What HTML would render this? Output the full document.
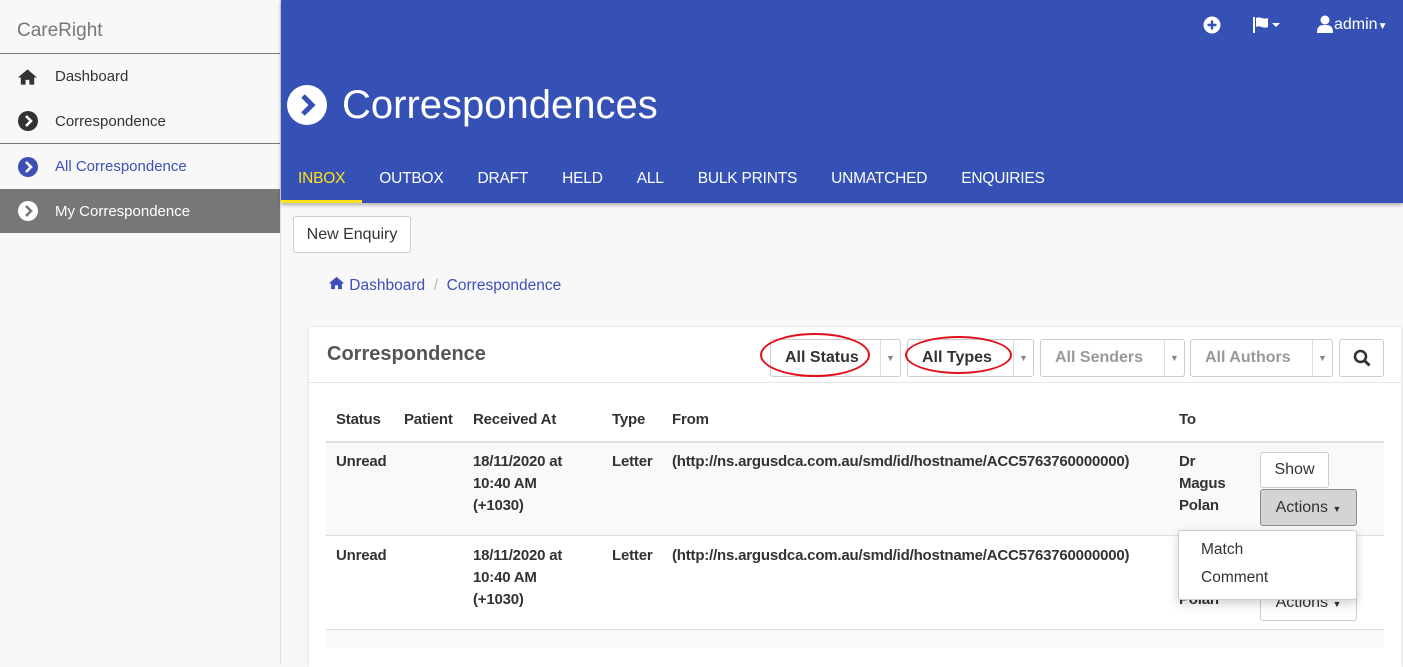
<!DOCTYPE html>
<html><head><meta charset="utf-8"><style>
*{box-sizing:border-box;margin:0;padding:0}
body{width:1403px;height:664px;overflow:hidden;background:#f8f8f8;font-family:"Liberation Sans",sans-serif;color:#333;position:relative}
.side{position:absolute;left:0;top:0;width:281px;height:664px;background:#f8f8f8;border-right:1px solid #e0e0e0}
.brand{height:54px;border-bottom:1px solid #777;font-size:19px;color:#777;padding:20px 0 0 17px}
.it{height:45px;display:flex;align-items:center;padding-left:17px;font-size:15px;color:#333}
.it .ic{width:21px;height:21px;margin-right:17px;display:flex;align-items:center;justify-content:center}
.hdr{position:absolute;left:281px;top:0;width:1122px;height:203px;background:#3551b5;box-shadow:0 2px 4px rgba(0,0,0,.3)}
.tabs{position:absolute;top:170px;left:0;display:flex;font-size:15.5px;color:#fff;letter-spacing:-0.2px}
.tabs div{padding:0 17px 0 17px;height:33px}
.panel{position:absolute;left:309px;top:327px;width:1092px;height:340px;background:#fff;box-shadow:0 0 3px rgba(0,0,0,.15)}
.sel{position:absolute;top:339px;height:38px;border:1px solid #ccc;border-radius:3px;background:#fff;font-size:16px;font-weight:bold;color:#333}
.sel span{position:absolute;top:9px}
.sel .ar{position:absolute;right:0;top:0;width:20px;height:36px;border-left:1px solid #ddd;font-size:9px;color:#888;text-align:center;line-height:36px}
.t{position:absolute;font-size:15px;font-weight:bold;color:#333;line-height:22px;letter-spacing:-0.2px}
.btn{position:absolute;border:1px solid #ccc;border-radius:3px;background:#fff;font-size:16px;color:#333;text-align:center}
.ell{position:absolute;border:2px solid #e0101a;border-radius:50%}
</style></head><body>
<div class="side">
<div class="brand">CareRight</div>
<div class="it"><div class="ic"><svg width="22" height="18" viewBox="0 0 22 18"><path d="M11 1L1 9.5h3V17h5v-5h4v5h5V9.5h3z" fill="#333"/></svg></div>Dashboard</div>
<div class="it" style="border-bottom:1px solid #777"><div class="ic"><svg width="20" height="20"><circle cx="10" cy="10" r="10" fill="#333"/><path d="M8 5l5 5-5 5" stroke="#fff" stroke-width="2.6" fill="none"/></svg></div>Correspondence</div>
<div class="it" style="color:#3e4fb8"><div class="ic"><svg width="20" height="20"><circle cx="10" cy="10" r="10" fill="#3e4fb8"/><path d="M8 5l5 5-5 5" stroke="#fff" stroke-width="2.6" fill="none"/></svg></div>All Correspondence</div>
<div class="it" style="background:#777;color:#fff;height:44px"><div class="ic"><svg width="20" height="20"><circle cx="10" cy="10" r="10" fill="#fff"/><path d="M8 5l5 5-5 5" stroke="#777" stroke-width="2.6" fill="none"/></svg></div>My Correspondence</div>
</div>
<div class="hdr">
<svg style="position:absolute;left:922px;top:16px" width="18" height="18"><circle cx="9" cy="9" r="8.5" fill="#fff"/><path d="M9 4.5v9M4.5 9h9" stroke="#3551b5" stroke-width="2.4"/></svg>
<svg style="position:absolute;left:972px;top:16px" width="30" height="18"><path d="M1 1v16" stroke="#fff" stroke-width="2"/><path d="M3 2c4-2 7 2 12 0v9c-5 2-8-2-12 0z" fill="#fff"/><path d="M19 7h8l-4 4z" fill="#fff"/></svg>
<svg style="position:absolute;left:1036px;top:15px" width="16" height="18"><circle cx="8" cy="5" r="4.5" fill="#fff"/><path d="M0 18c0-7 3-8 8-8s8 1 8 8z" fill="#fff"/></svg>
<div style="position:absolute;left:1053px;top:16px;color:#fff;font-size:16px">admin<span style="font-size:10px">▼</span></div>
<svg style="position:absolute;left:5px;top:84px" width="42" height="42"><circle cx="21" cy="21" r="20" fill="#fff"/><path d="M17 12l9 9-9 9" stroke="#3551b5" stroke-width="5" fill="none"/></svg>
<div style="position:absolute;left:61px;top:83px;color:#fff;font-size:40px">Correspondences</div>
<div class="tabs"><div style="color:#ffe119;border-bottom:3px solid #ffe119">INBOX</div><div>OUTBOX</div><div>DRAFT</div><div>HELD</div><div>ALL</div><div>BULK PRINTS</div><div>UNMATCHED</div><div>ENQUIRIES</div></div>
</div>
<div class="btn" style="left:293px;top:216px;width:118px;height:37px;line-height:35px">New Enquiry</div>
<div style="position:absolute;left:328px;top:276px;font-size:15.5px;color:#3e4fb8"><svg width="17" height="14" viewBox="0 0 22 18"><path d="M11 1L1 9.5h3V17h5v-5h4v5h5V9.5h3z" fill="#3e4fb8"/></svg> Dashboard <span style="color:#bbb">&nbsp;/&nbsp;</span> Correspondence</div>
<div class="panel">
<div style="position:absolute;left:0;top:55px;width:1092px;border-top:1px solid #e5e5e5"></div>
<div style="position:absolute;left:18px;top:16px;font-size:20px;font-weight:bold;color:#555">Correspondence</div>
<div style="position:absolute;left:17px;top:114px;width:1058px;height:2px;background:#ddd"></div>
<div style="position:absolute;left:17px;top:116px;width:1058px;height:93px;background:#f9f9f9"></div>
<div style="position:absolute;left:17px;top:208px;width:1058px;border-top:1px solid #ddd"></div>
<div style="position:absolute;left:17px;top:302px;width:1058px;height:19px;background:#f9f9f9;border-top:1px solid #ddd"></div>
</div>
<div class="sel" style="left:770px;width:131px"><span style="left:14px">All Status</span><div class="ar">▼</div></div>
<div class="sel" style="left:907px;width:127px"><span style="left:14px">All Types</span><div class="ar">▼</div></div>
<div class="sel" style="left:1040px;width:145px;color:#999"><span style="left:14px">All Senders</span><div class="ar">▼</div></div>
<div class="sel" style="left:1190px;width:143px;color:#999"><span style="left:14px">All Authors</span><div class="ar">▼</div></div>
<div class="btn" style="left:1339px;top:339px;width:45px;height:38px"><svg style="margin-top:9px" width="18" height="18"><circle cx="7.5" cy="7.5" r="5.5" stroke="#333" stroke-width="2.6" fill="none"/><path d="M11.5 11.5l5 5" stroke="#333" stroke-width="3"/></svg></div>
<div class="ell" style="left:760px;top:333px;width:110px;height:44px"></div>
<div class="ell" style="left:905px;top:336px;width:107px;height:38px"></div>
<div class="t" style="left:336px;top:409px">Status</div><div class="t" style="left:404px;top:409px">Patient</div><div class="t" style="left:473px;top:409px">Received At</div><div class="t" style="left:612px;top:409px">Type</div><div class="t" style="left:672px;top:409px">From</div><div class="t" style="left:1179px;top:409px">To</div>
<div class="t" style="left:336px;top:451px">Unread</div><div class="t" style="left:473px;top:451px">18/11/2020 at<br>10:40 AM<br>(+1030)</div><div class="t" style="left:612px;top:451px">Letter</div><div class="t" style="left:672px;top:451px">(http://ns.argusdca.com.au/smd/id/hostname/ACC5763760000000)</div><div class="t" style="left:1179px;top:451px">Dr<br>Magus<br>Polan</div>
<div class="t" style="left:336px;top:545px">Unread</div><div class="t" style="left:473px;top:545px">18/11/2020 at<br>10:40 AM<br>(+1030)</div><div class="t" style="left:612px;top:545px">Letter</div><div class="t" style="left:672px;top:545px">(http://ns.argusdca.com.au/smd/id/hostname/ACC5763760000000)</div><div class="t" style="left:1179px;top:589px">Polan</div>
<div class="btn" style="left:1260px;top:452px;width:69px;height:36px;line-height:34px">Show</div>
<div class="btn" style="left:1260px;top:489px;width:97px;height:37px;line-height:35px;background:#d4d4d4;border-color:#8c8c8c">Actions <span style="font-size:9px">▼</span></div>
<div class="btn" style="left:1260px;top:585px;width:97px;height:36px;line-height:34px">Actions <span style="font-size:9px">▼</span></div>
<div style="position:absolute;left:1178px;top:530px;width:179px;height:70px;background:#fff;border:1px solid #ccc;border-radius:3px;box-shadow:0 4px 10px rgba(0,0,0,.18);font-size:15.5px;color:#333">
<div style="position:absolute;left:22px;top:10px">Match</div><div style="position:absolute;left:22px;top:38px">Comment</div></div>
</body></html>
